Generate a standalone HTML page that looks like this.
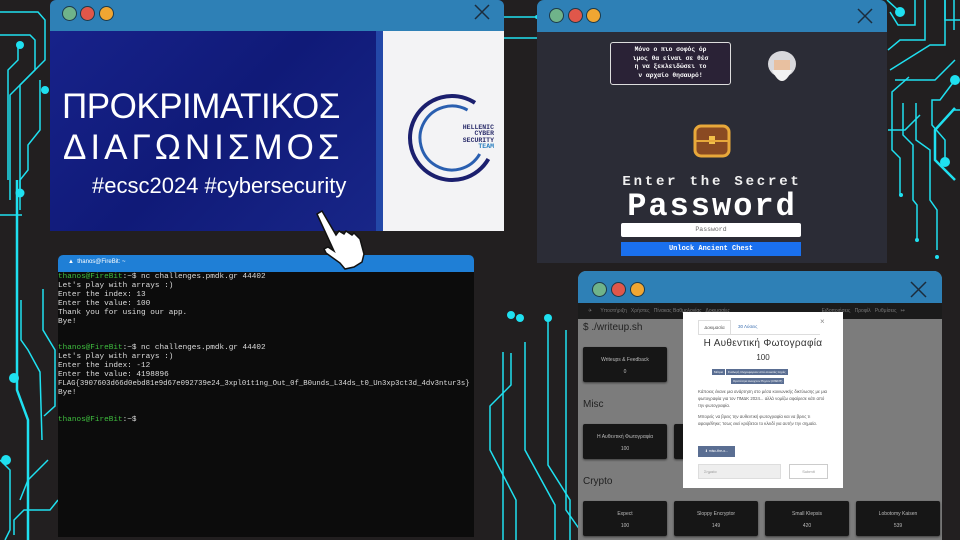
<!DOCTYPE html>
<html><head><meta charset="utf-8"><style>
*{margin:0;padding:0;box-sizing:border-box}
body{width:960px;height:540px;background:#221f20;position:relative;overflow:hidden;font-family:"Liberation Sans",sans-serif}
.abs{position:absolute}
.tb{position:absolute;left:0;right:0;top:0;background:#2e80b6}
.dot{position:absolute;border-radius:50%;border:1.5px solid #1d3a4a}
.mono{font-family:"Liberation Mono",monospace}
.card{position:absolute;background:#161616;border-radius:2px;color:#bbb;font-size:5px;text-align:center;box-shadow:0 1px 2px #0008}
.card div{margin-top:10px}
</style></head><body>
<svg class="abs" style="left:0;top:0" width="960" height="540" fill="none" stroke="#1fe0f0">
<g stroke-width="1.5">
<polyline points="0,12 38,12 45,20 45,60 20,85 20,210"/>
<polyline points="0,35 30,35 35,40 35,70 10,95 10,200"/>
<polyline points="18,45 18,60 8,70 8,180"/>
<polyline points="40,80 40,130 28,145 28,170 20,180 20,192"/>
<polyline points="0,215 22,215"/>
<polyline points="21,300 21,340 28,350 40,372 42,440"/>
<polyline points="43,289 43,330 55,350 55,406 44,416"/>
<polyline points="0,460 10,470 10,530 5,540"/>
<polyline points="20,500 28,480 48,460"/>
<polyline points="14,535 14,520 24,510 50,510 58,500"/>
<polyline points="504,17 537,17"/>
<polyline points="504,38 550,38"/>
<polyline points="511,353 511,385 490,406 490,450 516,500 516,540"/>
<polyline points="503,352 503,540"/>
<polyline points="525,342 525,450 555,505 555,540"/>
<polyline points="548,317 548,465 570,500 570,540"/>
<polyline points="566,330 566,510 580,530"/>
<polyline points="887,0 898,10"/>
<polyline points="890,12 898,25 915,25 915,0"/>
<polyline points="888,50 900,40 925,40 925,0"/>
<polyline points="890,70 930,45 945,45 945,0"/>
<polyline points="895,80 935,80 955,60"/>
<polyline points="955,80 940,100 932,100 932,125 945,140 945,162"/>
<polyline points="909,77 892,92 892,150 900,158 900,195"/>
<polyline points="903,103 903,135 913,145 913,200 917,205 917,240"/>
<polyline points="916,103 916,140 930,150 930,200 937,210 937,250"/>
<polyline points="888,130 905,130 920,115"/>
<polyline points="945,0 945,20 960,20"/>
<polyline points="952,110 960,110"/>
<polyline points="954,0 954,30"/>
</g>
<g stroke-width="2.5"><polyline points="17,180 17,390 28,420 28,540"/><polyline points="955,108 935,130 935,160 955,180"/></g>
<g fill="#1fe0f0" stroke="none">
<circle cx="20" cy="45" r="4"/><circle cx="20" cy="193" r="4.5"/><circle cx="45" cy="90" r="4"/>
<circle cx="14" cy="378" r="5"/><circle cx="6" cy="460" r="5"/><circle cx="520" cy="318" r="4"/><circle cx="548" cy="318" r="4"/><circle cx="511" cy="315" r="4"/>
<circle cx="900" cy="12" r="5"/><circle cx="955" cy="80" r="5"/><circle cx="945" cy="162" r="5"/><circle cx="901" cy="195" r="2"/><circle cx="917" cy="240" r="2"/><circle cx="937" cy="257" r="2"/><circle cx="552" cy="38" r="2"/><circle cx="537" cy="17" r="2"/>
</g>
</svg>

<!-- Window 1 -->
<div class="abs" style="left:50px;top:0;width:454px;height:231px;background:#141d78;border-radius:6px 6px 0 0;overflow:hidden">
 <div class="tb" style="height:31px"></div>
 <div class="dot" style="left:12px;top:6px;width:15px;height:15px;background:#6fb38a"></div>
 <div class="dot" style="left:30px;top:6px;width:15px;height:15px;background:#e0574a"></div>
 <div class="dot" style="left:49px;top:6px;width:15px;height:15px;background:#f0a632"></div>
 <svg class="abs" style="left:424px;top:4px" width="16" height="16" stroke="#1c2c3c" stroke-width="1.5"><path d="M1 1L15 15M15 1L1 15"/></svg>
 <div class="abs" style="left:0;top:31px;width:326px;height:200px;background:linear-gradient(135deg,#17228a,#101a78 50%,#182688)"></div>
 <div class="abs" style="left:326px;top:31px;width:7px;height:200px;background:#2348a8"></div>
 <div class="abs" style="left:333px;top:31px;width:121px;height:200px;background:#f3f3f5"></div>
 <div class="abs" style="left:12px;top:87px;color:#fff;font-size:35px;letter-spacing:-0.5px;font-weight:300">ΠΡΟΚΡΙΜΑΤΙΚΟΣ</div>
 <div class="abs" style="left:13px;top:128px;color:#fff;font-size:35px;letter-spacing:4px;font-weight:300">ΔΙΑΓΩΝΙΣΜΟΣ</div>
 <div class="abs" style="left:42px;top:173px;color:#fff;font-size:22px">#ecsc2024 #cybersecurity</div>
 <svg class="abs" style="left:354px;top:92px" width="100" height="95"><circle cx="48" cy="46" r="42" fill="none" stroke="#1b1f6e" stroke-width="4" stroke-dasharray="200 64" transform="rotate(30 48 46)"/><circle cx="48" cy="46" r="32" fill="none" stroke="#2a5fb0" stroke-width="3" stroke-dasharray="150 52" transform="rotate(30 48 46)"/></svg>
 <div class="abs mono" style="left:394px;top:125px;font-size:6.5px;line-height:6.3px;text-align:right;color:#2a2c6a;font-weight:bold;width:50px">HELLENIC<br>CYBER<br>SECURITY<br><span style="color:#2a7fc0">TEAM</span></div>
</div>

<!-- Terminal -->
<div class="abs" style="left:58px;top:255px;width:416px;height:282px;background:#0c0c0c;border-radius:5px 5px 0 0;overflow:hidden">
 <div class="abs" style="left:0;top:0;right:0;height:17px;background:#1f7fd6"></div>
 <div class="abs" style="left:10px;top:4px;font-size:6px;color:#fff">▲ &nbsp;thanos@FireBit: ~</div>
 <div class="abs mono" style="left:0;top:18px;font-size:7.7px;line-height:8.9px;color:#ddd;white-space:pre"><span style="color:#3fbf3f">thanos@FireBit</span>:~$ nc challenges.pmdk.gr 44402
Let's play with arrays :)
Enter the index: 13
Enter the value: 100
Thank you for using our app.
Bye!


<span style="color:#3fbf3f">thanos@FireBit</span>:~$ nc challenges.pmdk.gr 44402
Let's play with arrays :)
Enter the index: -12
Enter the value: 4198896
<span style="font-size:7.3px">FLAG{3907603d66d0ebd81e9d67e092739e24_3xpl01t1ng_Out_0f_B0unds_L34ds_t0_Un3xp3ct3d_4dv3ntur3s}</span>
Bye!


<span style="color:#3fbf3f">thanos@FireBit</span>:~$</div>
</div>

<!-- hand cursor -->
<svg class="abs" style="left:312px;top:207px" width="65" height="65"><path d="M5 7 L10 4 L24 28 L27 24 L32 27 L34 24 L40 28 L42 26 L48 32 L52 47 L50 55 L42 60 L33 62 L28 56 L14 46 L12 42 L16 40 L22 44 Z" fill="#fff" stroke="#111" stroke-width="1.5"/></svg>

<!-- Window 2 -->
<div class="abs" style="left:537px;top:0;width:350px;height:263px;background:#2b2c36;border-radius:7px 7px 0 0;overflow:hidden">
 <div class="tb" style="height:32px"></div>
 <div class="dot" style="left:12px;top:8px;width:15px;height:15px;background:#6fb38a"></div>
 <div class="dot" style="left:31px;top:8px;width:15px;height:15px;background:#e0574a"></div>
 <div class="dot" style="left:49px;top:8px;width:15px;height:15px;background:#f0a632"></div>
 <svg class="abs" style="left:320px;top:8px" width="16" height="16" stroke="#1c2c3c" stroke-width="1.5"><path d="M1 1L15 15M15 1L1 15"/></svg>
 <div class="abs mono" style="left:73px;top:42px;width:121px;height:43px;border:1.5px solid #ddd;border-radius:3px;background:#2a2236;color:#fff;font-size:6.3px;line-height:8.5px;text-align:center;padding-top:3px;font-weight:bold">Μόνο ο πιο σοφός όρ<br>ιμος θα είναι σε θέσ<br>η να ξεκλειδώσει το<br>ν αρχαίο θησαυρό!</div>
 <svg class="abs" style="left:227px;top:48px" width="38" height="40"><ellipse cx="18" cy="16" rx="14" ry="13" fill="#d8d8dc"/><rect x="10" y="12" width="16" height="10" fill="#e8c0a0"/><path d="M8 22 Q18 44 28 22 Z" fill="#f2f2f2"/></svg>
 <svg class="abs" style="left:148px;top:118px" width="55" height="42"><rect x="10" y="8" width="34" height="30" rx="6" fill="#8a4a22"/><rect x="10" y="8" width="34" height="30" rx="6" fill="none" stroke="#e8a83a" stroke-width="3"/><rect x="24" y="18" width="6" height="8" fill="#f2c04a"/><rect x="10" y="22" width="34" height="2" fill="#e8a83a"/></svg>
 <div class="abs mono" style="left:0;width:350px;top:174px;text-align:center;color:#f0f0f0;font-size:14px;font-weight:bold;letter-spacing:2.8px">Enter the Secret</div>
 <div class="abs mono" style="left:0;width:350px;top:188px;text-align:center;color:#fff;font-size:32px;font-weight:bold;letter-spacing:2px">Password</div>
 <div class="abs mono" style="left:84px;top:223px;width:180px;height:14px;background:#fff;border-radius:2px;text-align:center;color:#666;font-size:6.5px;line-height:14px">Password</div>
 <div class="abs mono" style="left:84px;top:242px;width:180px;height:14px;background:#1a70ee;text-align:center;color:#fff;font-size:7px;font-weight:bold;line-height:14px">Unlock Ancient Chest</div>
</div>

<!-- Window 3 -->
<div class="abs" style="left:578px;top:271px;width:364px;height:269px;background:#7c7c7c;border-radius:8px 8px 0 0;overflow:hidden">
 <div class="tb" style="height:32px"></div>
 <div class="dot" style="left:14px;top:11px;width:15px;height:15px;background:#6fb38a"></div>
 <div class="dot" style="left:33px;top:11px;width:15px;height:15px;background:#e0574a"></div>
 <div class="dot" style="left:52px;top:11px;width:15px;height:15px;background:#f0a632"></div>
 <svg class="abs" style="left:332px;top:10px" width="17" height="17" stroke="#1c2c3c" stroke-width="1.5"><path d="M1 1L16 16M16 1L1 16"/></svg>
 <div class="abs" style="left:0;top:32px;right:0;height:16px;background:#1b1b1b;color:#777;font-size:5px;line-height:16px;padding-left:10px;white-space:pre">✈      Υποστήριξη   Χρήστες   Πίνακας Βαθμολογίας   Δοκιμασίες                                                                  Ειδοποιήσεις   Προφίλ   Ρυθμίσεις   ↦</div>
 <div class="abs" style="left:5px;top:51px;color:#222;font-size:10px">$ ./writeup.sh</div>
 <div class="card" style="left:5px;top:76px;width:84px;height:35px"><div>Writeups &amp; Feedback<br><br>0</div></div>
 <div class="abs" style="left:5px;top:128px;color:#222;font-size:10px">Misc</div>
 <div class="card" style="left:5px;top:153px;width:84px;height:35px"><div>Η Αυθεντική Φωτογραφία<br><br>100</div></div>
 <div class="card" style="left:96px;top:153px;width:84px;height:35px"></div>
 <div class="abs" style="left:5px;top:205px;color:#222;font-size:10px">Crypto</div>
 <div class="card" style="left:5px;top:230px;width:84px;height:35px"><div>Expect<br><br>100</div></div>
 <div class="card" style="left:96px;top:230px;width:84px;height:35px"><div>Sloppy Encryptor<br><br>149</div></div>
 <div class="card" style="left:187px;top:230px;width:84px;height:35px"><div>Small Klepsis<br><br>420</div></div>
 <div class="card" style="left:278px;top:230px;width:84px;height:35px"><div>Lobotomy Kaisen<br><br>539</div></div>
 <!-- modal -->
 <div class="abs" style="left:105px;top:41px;width:160px;height:176px;background:#fff">
  <div class="abs" style="left:15px;top:8px;width:33px;height:14px;border:1px solid #ddd;border-bottom:none;font-size:4.5px;color:#555;line-height:13px;text-align:center">Δοκιμασία</div>
  <div class="abs" style="left:55px;top:8px;font-size:4.5px;color:#3a6eb0;line-height:13px">30 Λύσεις</div>
  <div class="abs" style="left:15px;top:22px;width:122px;height:1px;background:#ddd"></div>
  <div class="abs" style="left:137px;top:5px;font-size:8px;color:#888">×</div>
  <div class="abs" style="left:0;width:160px;top:26px;text-align:center;font-size:10px;color:#333;letter-spacing:0.3px">Η Αυθεντική Φωτογραφία</div>
  <div class="abs" style="left:0;width:160px;top:41px;text-align:center;font-size:8px;color:#333">100</div>
  <div class="abs" style="left:29px;top:58px;font-size:3px;color:#fff"><span style="background:#5a6e92;padding:1px 2px">Μέτρια</span> <span style="background:#5a6e92;padding:1px 2px">Συλλογή πληροφοριών από ανοικτές πηγές</span></div>
  <div class="abs" style="left:48px;top:66px;font-size:3px;color:#fff;background:#5a6e92;padding:1px 2px">Ορατότητα Ανοιχτών Πηγών (OSINT)</div>
  <div class="abs" style="left:15px;top:76px;width:130px;font-size:4.3px;line-height:7px;color:#555">Κάποιος έκανε μια ανάρτηση στο μέσα κοινωνικής δικτύωσης με μια φωτογραφία για τον ΠΜΔΚ 2024... αλλά νομίζω αφαίρεσε κάτι από την φωτογραφία.<br><span style="display:block;height:4px"></span>Μπορείς να βρεις την αυθεντική φωτογραφία και να βρεις τι αφαιρέθηκε; Ίσως εκεί κρύβεται το κλειδί για αυτήν την σημαία.</div>
  <div class="abs" style="left:15px;top:134px;width:37px;height:11px;background:#5a6e92;color:#fff;font-size:3.5px;line-height:11px;text-align:center">⬇ misc-the-o...</div>
  <div class="abs" style="left:15px;top:152px;width:83px;height:15px;background:#eee;border:1px solid #ddd;color:#999;font-size:4px;line-height:13px;padding-left:5px">Σημαία</div>
  <div class="abs" style="left:106px;top:152px;width:39px;height:15px;border:1px solid #ccc;color:#999;font-size:4px;line-height:13px;text-align:center">Submit</div>
 </div>
</div>
</body></html>
